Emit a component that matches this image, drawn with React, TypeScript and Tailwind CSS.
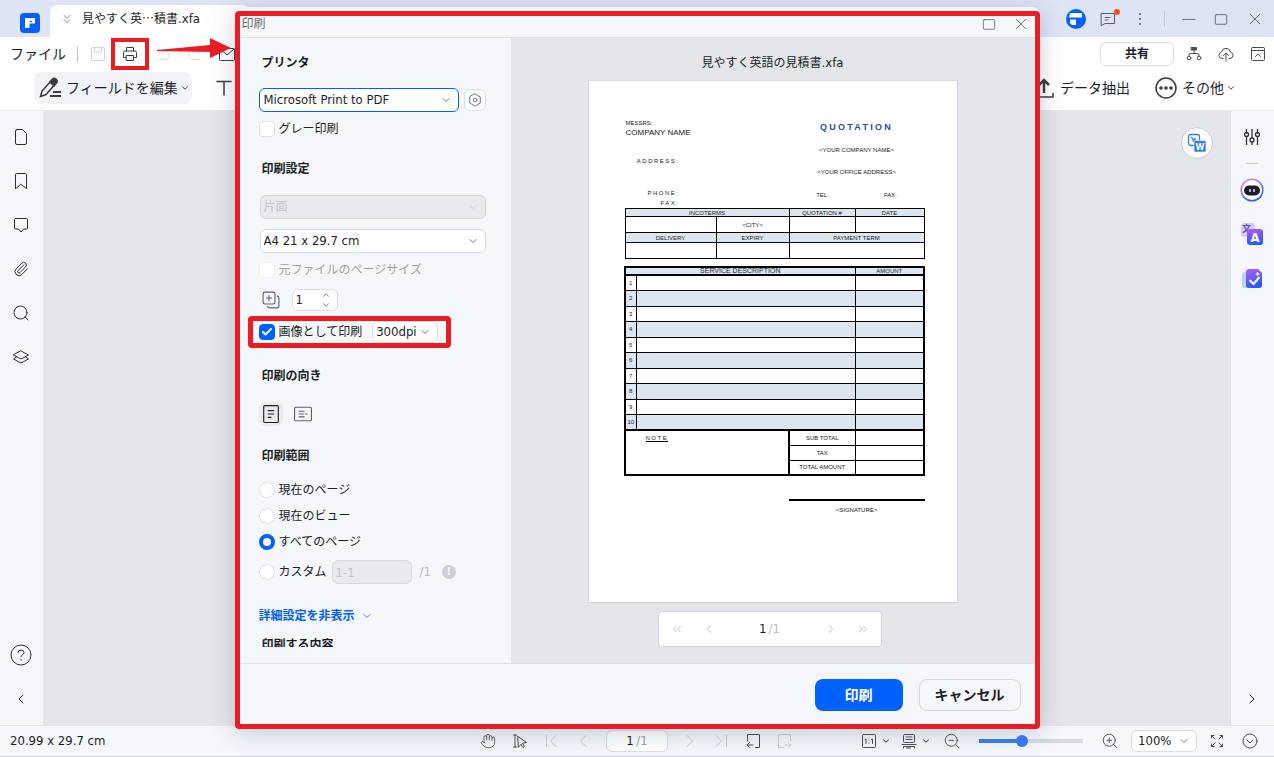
import { useState } from 'react';
import type { ReactNode } from 'react';
import clsx from 'clsx';
import {
    ChevronDown,
    ChevronLeft,
    ChevronRight,
    ChevronsDown,
    ChevronsLeft,
    ChevronsRight,
    ChevronUp,
    Check,
    Hand,
    Paperclip,
    ZoomIn,
    ZoomOut,
} from 'lucide-react';

type IconProps = {
    size?: number;
    className?: string;
    width?: number;
    children: ReactNode;
};

// Line icon on a 16 unit grid.
function Icon({ size = 16, className, width = 1, children }: IconProps) {
    return (
        <svg
            width={size}
            height={size}
            viewBox="0 0 16 16"
            fill="none"
            stroke="currentColor"
            strokeWidth={width}
            strokeLinecap="round"
            strokeLinejoin="round"
            className={clsx('shrink-0', className)}
            aria-hidden="true"
        >
            {children}
        </svg>
    );
}

function Logo({ round = false }: { round?: boolean }) {
    return (
        <svg
            width="20"
            height="20"
            viewBox="0 0 20 20"
            className="shrink-0"
            aria-hidden="true"
        >
            <rect width="20" height="20" rx={round ? 10 : 4} fill="#0061ff" />
            {round ? (
                <>
                    <path d="M4 4h12v4.5H3z" fill="#fff" />
                    <path d="M4 10.5h6V16H7a3 3 0 0 1-3-3z" fill="#fff" />
                </>
            ) : (
                <>
                    <path d="M5 5h10v5.5H5z" fill="#fff" />
                    <path d="M5 10h4.5v5H5z" fill="#fff" />
                    <path d="M9.5 8.5H12" stroke="#0061ff" />
                </>
            )}
        </svg>
    );
}

function IconButton({
    label,
    className,
    children,
}: {
    label: string;
    className?: string;
    children: ReactNode;
}) {
    return (
        <button
            type="button"
            aria-label={label}
            className={clsx(
                'flex shrink-0 items-center justify-center',
                className,
            )}
        >
            {children}
        </button>
    );
}

function TitleBar() {
    return (
        <div className="flex h-[37px] shrink-0 items-center justify-between bg-[#dfe4f4]">
            <div className="flex h-full items-end pl-5">
                <div className="flex h-full items-center pt-2">
                    <Logo />
                </div>
                <div className="ml-[10px] flex h-8 w-[200px] items-center gap-2 rounded-t-lg bg-white pb-1 pl-2.5">
                    <ChevronsDown
                        className="size-3.5 text-[#4b4f5c]"
                        strokeWidth={1.25}
                    />
                    <span className="text-xs text-[#1b1e26]">
                        見やすく英
                        <span className="font-[family-name:'Noto_Sans_CJK_JP',sans-serif]">
                            ⋯
                        </span>
                        積書<span className="text-[13px]">.xfa</span>
                    </span>
                </div>
            </div>
            <div className="flex items-center pr-px text-[#5d6078]">
                <Logo round />
                <IconButton label="メッセージ" className="relative ml-3.5 size-4">
                    <Icon>
                        <path d="M1.5 2.5h13v10H5l-3.5 2z" />
                        <path d="M5 6.5h5M5 9h3" />
                    </Icon>
                    <span className="absolute -top-0.5 -right-1 size-1.5 rounded-full bg-[#ff4d0a]" />
                </IconButton>
                <IconButton label="メニュー" className="ml-4 size-4">
                    <Icon width={2}>
                        <path d="M8 3v.1M8 8v.1M8 13v.1" />
                    </Icon>
                </IconButton>
                <span className="mr-2 ml-4 h-4 w-px bg-[#c5c9d8]" />
                <IconButton label="最小化" className="size-8">
                    <Icon size={14}>
                        <path d="M1 8.5h14" />
                    </Icon>
                </IconButton>
                <IconButton label="最大化" className="size-8">
                    <Icon size={14}>
                        <rect x="1.5" y="3" width="13" height="11" rx="1" />
                    </Icon>
                </IconButton>
                <IconButton label="閉じる" className="size-9">
                    <Icon size={14}>
                        <path d="M2.5 2.5l11 11M13.5 2.5l-11 11" />
                    </Icon>
                </IconButton>
            </div>
        </div>
    );
}

function Toolbar() {
    return (
        <div className="flex h-[74px] shrink-0 flex-col border-b border-[#e4e6ec] bg-white text-[#1b1e26]">
            <div className="flex h-[34px] items-center justify-between pr-2 pl-2.5">
                <div className="flex items-center">
                    <button type="button" className="text-sm">
                        ファイル
                    </button>
                    <span className="ml-[11px] h-4 w-px bg-[#c3c6d0]" />
                    <IconButton label="保存" className="ml-3 size-4 text-[#d3d4da]">
                        <Icon>
                            <rect x="1.5" y="1.5" width="13" height="13" rx="1.5" />
                            <path d="M4.5 1.5V6h7V1.5" />
                        </Icon>
                    </IconButton>
                    <div className="relative ml-4 flex items-center">
                        <IconButton label="印刷" className="size-4 text-[#3a3c42]">
                            <Icon>
                                <path d="M4.5 5V1.5h7V5M3.5 11.5h-2v-5A1.5 1.5 0 0 1 3 5h10a1.5 1.5 0 0 1 1.5 1.5v5h-2" />
                                <rect x="4.5" y="9.5" width="7" height="5" />
                            </Icon>
                        </IconButton>
                        <span className="pointer-events-none absolute -inset-x-[11px] -inset-y-2 border-4 border-[#ec1c24]" />
                        <svg
                            width="80"
                            height="24"
                            viewBox="0 0 80 24"
                            className="pointer-events-none absolute -top-2.5 left-[34px] z-30"
                            aria-hidden="true"
                        >
                            <path
                                d="M1 14 54 9V2l21 10-21 10v-6L1 15z"
                                fill="#ec1c24"
                            />
                        </svg>
                    </div>
                    <IconButton
                        label="元に戻す"
                        className="ml-[17px] size-4 text-[#dcdde3]"
                    >
                        <Icon>
                            <path d="M5 2 2 5l3 3M2 5h8a4 4 0 0 1 0 8.5H4" />
                        </Icon>
                    </IconButton>
                    <IconButton
                        label="やり直し"
                        className="ml-4 size-4 text-[#dcdde3]"
                    >
                        <Icon>
                            <path d="m11 2 3 3-3 3M14 5H6a4 4 0 0 0 0 8.5h6" />
                        </Icon>
                    </IconButton>
                    <IconButton
                        label="メール"
                        className="ml-4 size-4 text-[#3a3c42]"
                    >
                        <Icon>
                            <rect x=".5" y="2.5" width="15" height="12" rx="1" />
                            <path d="m1 3 7 6 7-6" />
                        </Icon>
                    </IconButton>
                </div>
                <div className="flex items-center gap-4 text-[#4a4c55]">
                    <button
                        type="button"
                        className="-mr-1 h-6 w-[74px] rounded-md border border-[#dcdde3] text-xs font-bold text-[#1b1e26]"
                    >
                        共有
                    </button>
                    <IconButton label="組織図" className="size-4">
                        <Icon>
                            <path d="M5.5 1.5h5V4h-5z" fill="currentColor" />
                            <path d="M8 4v3.5M3 10V9q0-1.5 1.5-1.5h7Q13 7.5 13 9v1" />
                            <circle cx="3" cy="12" r="1.8" />
                            <circle cx="13" cy="12" r="1.8" />
                        </Icon>
                    </IconButton>
                    <IconButton label="クラウド" className="size-4">
                        <Icon>
                            <path d="M5 12.5H4A3.3 3.3 0 0 1 3.5 6a4.6 4.6 0 0 1 9 0 3.3 3.3 0 0 1-.5 6.5h-1" />
                            <path d="M8 15V7.5M5.5 9.5 8 7l2.5 2.5" />
                        </Icon>
                    </IconButton>
                    <IconButton label="折りたたむ" className="size-4">
                        <Icon>
                            <rect x="1.5" y="1.5" width="13" height="13" rx="1" />
                            <path d="M1.5 4.5h13M5.5 10.5 8 8l2.5 2.5" />
                        </Icon>
                    </IconButton>
                </div>
            </div>
            <div className="flex h-[34px] items-center justify-between pr-[38px] pl-[34px]">
                <div className="flex items-center gap-6">
                    <button
                        type="button"
                        className="flex h-8 w-[158px] items-center rounded-lg bg-[#f1f3f9] pl-1 text-sm"
                    >
                        <svg
                            width="24"
                            height="24"
                            viewBox="0 0 24 24"
                            fill="none"
                            stroke="#3a3c42"
                            strokeWidth="1.5"
                            aria-hidden="true"
                        >
                            <path d="M2.5 20.500 4 15l8-9 4 3.500-8 9z" />
                            <path
                                d="m12 6 2.500-3q1.500-1.500 3.500 0t.5 4L16 10z"
                                fill="#3a3c42"
                            />
                            <path d="M15 16h8M12 20h11" strokeWidth="2" />
                        </svg>
                        <span className="ml-1">フィールドを編集</span>
                        <ChevronDown className="ml-0.5 size-2.5" strokeWidth={2} />
                    </button>
                    <IconButton label="テキスト" className="size-4 text-[#3a3c42]">
                        <Icon width={1.5}>
                            <path d="M1 1.5h14M8 1.5V15" />
                        </Icon>
                    </IconButton>
                </div>
                <div className="flex items-center">
                    <button type="button" className="flex items-center text-sm">
                        <svg
                            width="20"
                            height="24"
                            viewBox="0 0 20 24"
                            fill="none"
                            stroke="#3a3c42"
                            strokeWidth="2.5"
                            aria-hidden="true"
                        >
                            <path d="M10 17V4M5 9l5-5 5 5" />
                            <path d="M1 17v4h18v-4" strokeWidth="1.5" />
                        </svg>
                        <span className="ml-1.5">データ抽出</span>
                    </button>
                    <button type="button" className="ml-6 flex items-center text-sm">
                        <svg width="24" height="24" viewBox="0 0 24 24" aria-hidden="true">
                            <circle
                                cx="12"
                                cy="12"
                                r="10"
                                fill="none"
                                stroke="#3a3c42"
                                strokeWidth="1.5"
                            />
                            <circle cx="7" cy="12" r="1.8" fill="#3a3c42" />
                            <circle cx="12" cy="12" r="1.8" fill="#3a3c42" />
                            <circle cx="17" cy="12" r="1.8" fill="#3a3c42" />
                        </svg>
                        <span className="ml-1">その他</span>
                        <ChevronDown className="ml-0.5 size-2.5" strokeWidth={2} />
                    </button>
                </div>
            </div>
        </div>
    );
}

function LeftRail() {
    return (
        <nav className="flex w-[43px] shrink-0 flex-col items-center bg-[#f5f7fb] py-[18px] pr-0.5 text-[#2d2f36]">
            <div className="flex flex-1 flex-col gap-7">
                <IconButton label="ページ" className="size-4">
                    <Icon>
                        <path d="M3.5.5h6l4 4V14q0 1.5-1.5 1.5H4Q2.5 15.5 2.5 14V2Q2.500.5 4 .5z" />
                    </Icon>
                </IconButton>
                <IconButton label="しおり" className="size-4">
                    <Icon>
                        <path d="M2.500 15.500V1.500q0-1 1-1h9q1 0 1 1v14l-5.500-4z" />
                    </Icon>
                </IconButton>
                <IconButton label="コメント" className="size-4">
                    <Icon>
                        <path d="M2.500 1.500h11q1 0 1 1v8.500q0 1-1 1h-3L8 15l-2.500-3h-3q-1 0-1-1V2.500q0-1 1-1z" />
                    </Icon>
                </IconButton>
                <IconButton label="添付" className="size-4">
                    <Paperclip className="size-4" strokeWidth={1.5} />
                </IconButton>
                <IconButton label="検索" className="size-4">
                    <Icon>
                        <circle cx="7.5" cy="7.5" r="6.5" />
                        <path d="m12 12 3 3" />
                    </Icon>
                </IconButton>
                <IconButton label="レイヤー" className="size-4">
                    <Icon>
                        <path d="m8 2 7.500 4L8 10 .5 6z" />
                        <path d="M3.500 7.800.5 10 8 14l7.500-4-3-2.200" />
                    </Icon>
                </IconButton>
            </div>
            <div className="flex flex-col items-center gap-[26px]">
                <IconButton label="ヘルプ" className="size-5">
                    <svg
                        width="22"
                        height="22"
                        viewBox="0 0 22 22"
                        fill="none"
                        stroke="currentColor"
                        className="shrink-0"
                        aria-hidden="true"
                    >
                        <circle cx="11" cy="11" r="10" />
                        <path d="M8 9q0-3 3-3t3 2.500q0 1.500-1.500 2.300T11 13M11 15v1.500" />
                    </svg>
                </IconButton>
                <IconButton label="閉じる" className="size-4">
                    <ChevronLeft className="size-4" strokeWidth={1.5} />
                </IconButton>
            </div>
        </nav>
    );
}

function RightRail() {
    return (
        <nav className="flex w-11 shrink-0 flex-col items-center border-l border-[#dfe1e8] bg-[#f5f7fb] py-[18px] pr-0.5 text-[#2d2f36]">
            <IconButton label="設定" className="size-4">
                <Icon width={1.3}>
                    <path d="M2.500 0v4M2.500 8v8M8 0v9M8 13v3M13.500 0v4M13.500 8v8" />
                    <circle cx="2.5" cy="5.5" r="2" />
                    <circle cx="8" cy="11" r="2" />
                    <circle cx="13.5" cy="5.5" r="2" />
                </Icon>
            </IconButton>
            <span className="mt-[18px] h-px w-3 bg-[#c9ccd6]" />
            <IconButton label="AI" className="mt-3.5 size-6">
                <svg width="24" height="24" viewBox="0 0 24 24" aria-hidden="true">
                    <defs>
                        <linearGradient id="ring" x1="0" y1="0" x2="0.5" y2="1">
                            <stop offset="0" stopColor="#f78be8" />
                            <stop offset="1" stopColor="#2a62ff" />
                        </linearGradient>
                        <linearGradient id="tile" x1="0.2" y1="0" x2="0.5" y2="1">
                            <stop offset="0" stopColor="#b05cf5" />
                            <stop offset="1" stopColor="#1f5cff" />
                        </linearGradient>
                    </defs>
                    <circle
                        cx="12"
                        cy="12"
                        r="10.8"
                        fill="#fff"
                        stroke="url(#ring)"
                        strokeWidth="1.5"
                    />
                    <rect x="4" y="7.5" width="16" height="10" rx="5" fill="#1b1b2b" />
                    <path d="M10 11v3M14 11v3" stroke="#fff" strokeWidth="1.3" />
                </svg>
            </IconButton>
            <IconButton label="翻訳" className="mt-5 size-6">
                <svg width="24" height="24" viewBox="0 0 24 24" aria-hidden="true">
                    <rect x="1" y="1" width="14" height="14" rx="3" fill="#d9cdf6" />
                    <text x="2" y="10" fontSize="9" fontWeight="700" fill="#5a4fe0">
                        文
                    </text>
                    <rect x="7" y="7" width="16" height="16" rx="3" fill="url(#tile)" />
                    <text
                        x="15"
                        y="20"
                        fontSize="13"
                        fontWeight="700"
                        textAnchor="middle"
                        fill="#fff"
                    >
                        A
                    </text>
                </svg>
            </IconButton>
            <IconButton label="校正" className="mt-5 size-6">
                <svg width="24" height="24" viewBox="0 0 24 24" aria-hidden="true">
                    <rect x="2" y="6" width="14" height="16" rx="3" fill="#bdd0f8" />
                    <path
                        d="M9 3h9l4 4v12q0 3-3 3H9q-3 0-3-3V6q0-3 3-3z"
                        fill="url(#tile)"
                    />
                    <path
                        d="m9.500 14 4 4 6-7"
                        stroke="#fff"
                        strokeWidth="2"
                        fill="none"
                    />
                    <path d="M17.500 6v4M15.500 8h4" stroke="#fff" strokeWidth="1.2" />
                </svg>
            </IconButton>
            <IconButton label="開く" className="mt-auto size-4">
                <ChevronRight className="size-4" strokeWidth={1.5} />
            </IconButton>
        </nav>
    );
}

function StatusBar() {
    return (
        <footer className="flex h-8 shrink-0 items-center border-t border-b border-t-[#e4e6ec] border-b-[#cdd2e2] bg-[#f5f7fb] px-2.5 text-[13px] text-[#1b1e26]">
            <span className="flex-1">20.99 x 29.7 cm</span>
            <div className="flex items-center gap-4 text-[#4a4c55]">
                <IconButton label="手のひら" className="size-4">
                    <Hand className="size-4" strokeWidth={1.25} />
                </IconButton>
                <IconButton label="選択" className="size-4">
                    <Icon>
                        <path d="M1.500 2h3M3 2v12M1.500 14h3M6 3.500l8.500 6-4 .8 2 3.200-1.700 1L9 11.200 6.500 14z" />
                    </Icon>
                </IconButton>
                <IconButton label="最初" className="size-4 text-[#c9ccd4]">
                    <Icon>
                        <path d="M2.500 2.500v11M12 2.500 6.500 8l5.500 5.500" />
                    </Icon>
                </IconButton>
                <IconButton label="前" className="size-4 text-[#c9ccd4]">
                    <Icon>
                        <path d="M10 2.500 4.500 8l5.500 5.500" />
                    </Icon>
                </IconButton>
                <div className="-mx-0.5 flex h-[22px] w-[62px] items-center justify-center rounded-md border border-[#dcdde3] bg-white">
                    <input
                        aria-label="ページ番号"
                        defaultValue="1"
                        className="w-2 bg-transparent text-[#1b1e26] outline-none"
                    />
                    <span className="ml-0.5 text-[#a3a5ae]">/1</span>
                </div>
                <IconButton label="次" className="size-4 text-[#c9ccd4]">
                    <Icon>
                        <path d="M5 2.500 10.500 8 5 13.500" />
                    </Icon>
                </IconButton>
                <IconButton label="最後" className="size-4 text-[#c9ccd4]">
                    <Icon>
                        <path d="M2 2.500 7.500 8 2 13.500M12.500 2.500v11" />
                    </Icon>
                </IconButton>
                <IconButton label="前の表示" className="size-4">
                    <Icon>
                        <path d="M1.500 8V1.500h12v13h-4M1 12h6M3.500 9.500 1 12l2.500 2.500" />
                    </Icon>
                </IconButton>
                <IconButton label="次の表示" className="size-4 text-[#c9ccd4]">
                    <Icon>
                        <path d="M12.500 8V1.500H.5v13h5M7 12h6M10.500 9.500 13 12l-2.500 2.500" />
                    </Icon>
                </IconButton>
            </div>
            <div className="flex flex-1 items-center justify-end text-[#4a4c55]">
                <IconButton label="実寸" className="gap-1">
                    <Icon>
                        <rect x="1.5" y="1.5" width="13" height="13" rx="1" />
                        <path d="m4 6.500 1-.5v4.500M10.500 6.500l1-.5v4.500M8 7v.1M8 10v.1" />
                    </Icon>
                    <ChevronDown className="size-2.5" strokeWidth={2.5} />
                </IconButton>
                <IconButton label="表示モード" className="ml-2.5 gap-1">
                    <Icon>
                        <rect x="2.5" y="1.5" width="11" height="8" rx="1" />
                        <path d="M5 4h6M5 6.500h6M1 11.500h14M2.500 15v-1.500h11V15M5.500 15h4" />
                    </Icon>
                    <ChevronDown className="size-2.5" strokeWidth={2.5} />
                </IconButton>
                <IconButton label="縮小" className="ml-3 size-[18px]">
                    <ZoomOut className="size-[18px]" strokeWidth={1.25} />
                </IconButton>
                <input
                    type="range"
                    aria-label="ズーム"
                    defaultValue={40}
                    className="mx-[18px] h-1 w-[104px] appearance-none bg-[linear-gradient(to_right,#367cfb_40%,#d5d8e6_40%)] [&::-webkit-slider-thumb]:size-3 [&::-webkit-slider-thumb]:appearance-none [&::-webkit-slider-thumb]:rounded-full [&::-webkit-slider-thumb]:bg-[#367cfb]"
                />
                <IconButton label="拡大" className="size-[18px]">
                    <ZoomIn className="size-[18px]" strokeWidth={1.25} />
                </IconButton>
                <Dropdown
                    label="倍率"
                    options={['100%']}
                    className="mx-3 h-[22px] w-[66px] border-[#dcdde3] bg-white pl-1.5 text-[#1b1e26]"
                />
                <IconButton label="全画面" className="size-4">
                    <Icon>
                        <path d="M2.500 5V2.500H5M2.500 2.500 6 6M11 2.500h2.500V5M13.500 2.500 10 6M2.500 11v2.500H5M2.500 13.500 6 10M13.500 11v2.500H11M13.500 13.500 10 10" />
                    </Icon>
                </IconButton>
                <IconButton label="その他の表示" className="mr-1.5 ml-[17px] size-4">
                    <Icon>
                        <circle cx="8" cy="8" r="7" />
                        <path d="m5 7 3 3 3-3" />
                    </Icon>
                </IconButton>
            </div>
        </footer>
    );
}

type DropdownProps = {
    label: string;
    options: string[];
    className?: string;
    disabled?: boolean;
};

function Dropdown({ label, options, className, disabled }: DropdownProps) {
    return (
        <div className={clsx('relative shrink-0 rounded-md border', className)}>
            <select
                aria-label={label}
                disabled={disabled}
                className="block h-full w-full appearance-none bg-transparent outline-none"
            >
                {options.map((o) => (
                    <option key={o}>{o}</option>
                ))}
            </select>
            <ChevronDown
                className="pointer-events-none absolute inset-y-0 right-1.5 my-auto size-3 opacity-70"
                strokeWidth={1.75}
            />
        </div>
    );
}

function Checkbox({
    label,
    defaultChecked,
    disabled,
}: {
    label: string;
    defaultChecked?: boolean;
    disabled?: boolean;
}) {
    return (
        <label
            className={clsx(
                'flex items-center gap-1 text-xs',
                disabled && 'text-[#a0a2a9]',
            )}
        >
            <span className="relative flex size-4">
                <input
                    type="checkbox"
                    defaultChecked={defaultChecked}
                    disabled={disabled}
                    className="peer size-4 appearance-none rounded border border-[#e0e2e8] bg-white checked:border-[#0061ff] checked:bg-[#0061ff] disabled:border-[#f0f1f5]"
                />
                <Check
                    className="pointer-events-none absolute inset-0.5 hidden size-3 text-white peer-checked:block"
                    strokeWidth={4}
                />
            </span>
            {label}
        </label>
    );
}

const RANGES = [
    { id: 'page', label: '現在のページ' },
    { id: 'view', label: '現在のビュー' },
    { id: 'all', label: 'すべてのページ' },
    { id: 'custom', label: 'カスタム' },
];

function Heading({ children }: { children: ReactNode }) {
    return (
        <h2 className="pl-[3px] text-xs leading-6 font-bold whitespace-nowrap">
            {children}
        </h2>
    );
}

function PrintSettings() {
    const [range, setRange] = useState('all');

    return (
        <div className="w-[271px] shrink-0 pb-4">
            <div className="flex h-[609px] flex-col items-start overflow-hidden pt-[13px] pl-[19px] text-[#1b1e26] *:shrink-0">
                <Heading>プリンタ</Heading>
                <div className="mt-[13px] flex h-6 items-center gap-[5px]">
                    <Dropdown
                        label="プリンタ"
                        options={['Microsoft Print to PDF']}
                        className="h-6 w-[200px] border-[#0061ff] bg-white pl-1 text-[13px]"
                    />
                    <IconButton
                        label="プリンタの設定"
                        className="size-[22px] rounded-md border border-[#dcdde3] bg-white text-[#5d6078]"
                    >
                        <Icon size={14}>
                            <path d="m8 1 6 3.500v7L8 15l-6-3.500v-7z" />
                            <circle cx="8" cy="8" r="2" />
                        </Icon>
                    </IconButton>
                </div>
                <div className="mt-[5px] flex h-6 items-center">
                    <Checkbox label="グレー印刷" />
                </div>

                <div className="mt-4">
                    <Heading>印刷設定</Heading>
                </div>
                <Dropdown
                    label="両面印刷"
                    options={['片面']}
                    disabled
                    className="mt-3.5 ml-px h-6 w-[226px] border-[#d6d8de] bg-[#e9eaee] pl-[3px] text-xs text-[#c3c5cb]"
                />
                <Dropdown
                    label="用紙サイズ"
                    options={['A4 21 x 29.7 cm']}
                    className="mt-2.5 ml-px h-6 w-[226px] border-[#dcdde3] bg-white pl-[3px] text-[13px]"
                />
                <div className="mt-[5px] flex h-6 items-center">
                    <Checkbox label="元ファイルのページサイズ" disabled />
                </div>
                <div className="mt-1.5 flex h-6 items-center">
                    <Icon size={18} className="ml-[3px] text-[#5d6078]">
                        <rect x="1" y="1" width="10.5" height="10.5" rx="1.5" />
                        <path d="M6.200 4v4.500M4 6.200h4.500M13.500 4.500q1.500 0 1.500 1.500v7.500q0 1.500-1.500 1.500H6.500Q5 15 5 13.500" />
                    </Icon>
                    <div className="ml-3 flex h-[22px] w-[46px] items-center rounded-md border border-[#dcdde3] bg-white pr-1.5 pl-[3px]">
                        <input
                            aria-label="部数"
                            defaultValue="1"
                            className="w-5 flex-1 bg-transparent text-[13px] outline-none"
                        />
                        <span className="flex flex-col text-[#5d6078]">
                            <ChevronUp className="size-2.5" strokeWidth={2} />
                            <ChevronDown className="size-2.5" strokeWidth={2} />
                        </span>
                    </div>
                </div>
                <div className="relative mt-2 flex h-6 items-center gap-2.5 pr-0.5">
                    <Checkbox label="画像として印刷" defaultChecked />
                    <Dropdown
                        label="解像度"
                        options={['300dpi']}
                        className="h-[22px] w-[66px] border-[#dcdde3] bg-white pl-[3px] text-[13px]"
                    />
                    <span className="pointer-events-none absolute -inset-x-[11px] -inset-y-1 rounded-sm border-[5px] border-[#ec1c24]" />
                </div>

                <div className="mt-5">
                    <Heading>印刷の向き</Heading>
                </div>
                <div className="mt-3.5 flex h-6 items-center gap-2">
                    <IconButton
                        label="縦"
                        className="size-6 rounded-md bg-[#e9ebf0] text-[#1b1e26]"
                    >
                        <Icon size={18}>
                            <rect x="1.5" y=".5" width="13" height="15" rx="1" />
                            <path d="M5.500 5h5M5.500 8h5M5.500 11H8" />
                        </Icon>
                    </IconButton>
                    <IconButton label="横" className="size-6 text-[#5d6078]">
                        <Icon size={18}>
                            <rect x=".5" y="2" width="15" height="12" rx="1" />
                            <path d="M4.500 5.500H9M4.500 8h4M10 8h1.500M4.500 10.500H9" />
                        </Icon>
                    </IconButton>
                </div>

                <div className="mt-[18px]">
                    <Heading>印刷範囲</Heading>
                </div>
                <div className="mt-2.5 flex flex-col gap-0.5">
                    {RANGES.map((r) => (
                        <div
                            key={r.id}
                            className={clsx(
                                'flex h-6 items-center text-xs',
                                r.id === 'custom' && 'mt-1',
                            )}
                        >
                            <label className="flex items-center gap-1">
                                <input
                                    type="radio"
                                    name="range"
                                    checked={range === r.id}
                                    onChange={() => setRange(r.id)}
                                    className="size-4 appearance-none rounded-full border border-[#e0e2e8] bg-white checked:border-4 checked:border-[#0061ff]"
                                />
                                {r.label}
                            </label>
                            {r.id === 'custom' && (
                                <>
                                    <input
                                        aria-label="ページ範囲"
                                        placeholder="1-1"
                                        disabled={range !== 'custom'}
                                        className="ml-[5px] h-6 w-20 rounded-md border border-[#d6d8de] bg-[#e9eaee] px-[3px] text-[13px] placeholder:text-[#c3c5cb]"
                                    />
                                    <span className="ml-2 text-[13px] text-[#b9bbc3]">
                                        /1
                                    </span>
                                    <span className="ml-[11px] flex size-3.5 items-center justify-center rounded-full bg-[#cccfd7] text-[10px] font-bold text-white">
                                        !
                                    </span>
                                </>
                            )}
                        </div>
                    ))}
                </div>
                <button
                    type="button"
                    className="mt-5 flex h-6 items-center gap-1.5 text-xs font-bold text-[#0061ff]"
                >
                    詳細設定を非表示
                    <ChevronDown className="size-3 opacity-70" strokeWidth={2} />
                </button>
                <div className="mt-[5px]">
                    <Heading>印刷する内容</Heading>
                </div>
            </div>
        </div>
    );
}

const SERVICE_ROWS = [1, 2, 3, 4, 5, 6, 7, 8, 9, 10];

function QuotationSheet() {
    return (
        <article className="w-[370px] border border-[#d3d5e3] bg-white pt-[37px] pr-8 pb-[87px] pl-[35px] font-[family-name:'Liberation_Sans',sans-serif] text-[6px] leading-[10px] text-[#222]">
            <header className="flex h-[90px] justify-between">
                <div className="w-14 pl-0.5 whitespace-nowrap">
                    <p>MESSRS:</p>
                    <p className="text-[8px]">COMPANY NAME</p>
                    <p className="mt-[18px] text-right tracking-[0.25em]">ADDRESS:</p>
                    <p className="mt-[22px] text-right tracking-[0.25em]">PHONE:</p>
                    <p className="text-right tracking-[0.25em]">FAX:</p>
                </div>
                <div className="w-[136px] text-center">
                    <h3 className="mt-1 text-[9px] font-bold tracking-[0.25em] text-[#2c4f82]">
                        QUOTATION
                    </h3>
                    <p className="mt-[13px]">&lt;YOUR COMPANY NAME&gt;</p>
                    <p className="mt-3">&lt;YOUR OFFICE ADDRESS&gt;</p>
                    <div className="mt-[13px] grid grid-cols-2">
                        <p>TEL:</p>
                        <p>FAX:</p>
                    </div>
                </div>
            </header>

            <table className="ml-px w-[299px] table-fixed border-collapse text-center leading-[6px] [&_td]:border [&_td]:border-black [&_td]:p-0 [&_th]:border [&_th]:border-black [&_th]:bg-[#dce6f1] [&_th]:p-0 [&_th]:font-normal">
                <colgroup>
                    <col className="w-[91px]" />
                    <col className="w-[73px]" />
                    <col className="w-[66px]" />
                    <col className="w-[69px]" />
                </colgroup>
                <tbody>
                    <tr className="h-2">
                        <th colSpan={2}>INCOTERMS</th>
                        <th>QUOTATION #</th>
                        <th>DATE</th>
                    </tr>
                    <tr className="h-4">
                        <td />
                        <td>&lt;CITY&gt;</td>
                        <td />
                        <td />
                    </tr>
                    <tr className="h-2.5">
                        <th>DELIVERY</th>
                        <th>EXPIRY</th>
                        <th colSpan={2}>PAYMENT TERM</th>
                    </tr>
                    <tr className="h-4">
                        <td />
                        <td />
                        <td colSpan={2} />
                    </tr>
                </tbody>
            </table>

            <table className="mt-[7px] w-[300px] table-fixed border-collapse border-2 border-black text-center leading-[6px] [&_td]:border [&_td]:border-black [&_td]:p-0 [&_th]:border [&_th]:border-black [&_th]:p-0 [&_th]:font-normal">
                <colgroup>
                    <col className="w-3" />
                    <col className="w-[152px]" />
                    <col className="w-[67px]" />
                    <col className="w-[68px]" />
                </colgroup>
                <thead className="border-b-2 border-black bg-[#dce6f1]">
                    <tr className="h-2">
                        <th colSpan={3} className="text-[7px]">
                            SERVICE DESCRIPTION
                        </th>
                        <th>AMOUNT</th>
                    </tr>
                </thead>
                <tbody className="border-b-2 border-black">
                    {SERVICE_ROWS.map((n) => (
                        <tr
                            key={n}
                            className={n % 2 ? 'h-[15px]' : 'h-4 bg-[#dce6f1]'}
                        >
                            <td>{n}</td>
                            <td colSpan={2} />
                            <td />
                        </tr>
                    ))}
                </tbody>
                <tbody>
                    {['SUB TOTAL', 'TAX', 'TOTAL AMOUNT'].map((t, i) => (
                        <tr key={t} className="h-[15px]">
                            {i === 0 && (
                                <td
                                    colSpan={2}
                                    rowSpan={3}
                                    className="align-top"
                                >
                                    <p className="pt-1 pl-5 text-left">
                                        <span className="border-b border-black tracking-[0.25em]">
                                            NOTE
                                        </span>
                                    </p>
                                </td>
                            )}
                            <td className="border-l-2!">{t}</td>
                            <td />
                        </tr>
                    ))}
                </tbody>
            </table>

            <p className="mt-[23px] ml-auto w-[136px] border-t-2 border-black pt-1 text-center">
                &lt;SIGNATURE&gt;
            </p>
        </article>
    );
}

function Preview() {
    return (
        <div className="flex flex-1 flex-col items-center bg-[#e5e6ea] pt-[13px]">
            <p className="h-6 text-xs leading-6 text-[#1b1e26]">
                見やすく英語の見積書<span className="text-[13px]">.xfa</span>
            </p>
            <div className="mt-[5px]">
                <QuotationSheet />
            </div>
            <div className="mt-2 mr-1.5 flex h-9 w-[224px] items-center justify-between rounded border border-[#d3d5e3] bg-white px-2.5 text-[13px] text-[#b9bbc3]">
                <div className="flex gap-4">
                    <IconButton label="最初のページ" className="size-4">
                        <ChevronsLeft className="size-3.5" strokeWidth={1.5} />
                    </IconButton>
                    <IconButton label="前のページ" className="size-4">
                        <ChevronLeft className="size-3.5" strokeWidth={1.5} />
                    </IconButton>
                </div>
                <span>
                    <span className="mr-0.5 text-[#1b1e26]">1</span>/1
                </span>
                <div className="flex gap-4">
                    <IconButton label="次のページ" className="size-4">
                        <ChevronRight className="size-3.5" strokeWidth={1.5} />
                    </IconButton>
                    <IconButton label="最後のページ" className="size-4">
                        <ChevronsRight className="size-3.5" strokeWidth={1.5} />
                    </IconButton>
                </div>
            </div>
        </div>
    );
}

function PrintDialog() {
    return (
        <div className="pointer-events-none absolute inset-x-0 top-[7px] bottom-7 z-20 flex justify-center">
            <section
                role="dialog"
                aria-label="印刷"
                className="pointer-events-auto flex w-full max-w-[805px] flex-col rounded-t-lg bg-[#f5f7fb] pt-1 shadow-[0_4px_24px_rgba(60,70,110,0.25)]"
            >
                <div className="flex flex-1 flex-col rounded-sm border-[5px] border-[#ec1c24]">
                    <div className="flex h-[22px] shrink-0 items-center justify-between border-b border-[#dfe1e6] pb-1.5 pl-0.5 text-xs text-[#6b6d78]">
                        <span>印刷</span>
                        <div className="flex items-center gap-4 pr-1.5">
                            <IconButton label="最大化" className="size-4">
                                <Icon size={14}>
                                    <rect x="1.5" y="3" width="13" height="11" rx="1" />
                                </Icon>
                            </IconButton>
                            <IconButton label="閉じる" className="size-4">
                                <Icon size={14}>
                                    <path d="M2.500 2.500l11 11M13.500 2.500l-11 11" />
                                </Icon>
                            </IconButton>
                        </div>
                    </div>
                    <div className="flex flex-1">
                        <PrintSettings />
                        <Preview />
                    </div>
                    <div className="flex h-[61px] shrink-0 items-center justify-end gap-4 border-t border-[#dfe1e6] pt-0.5 pr-3.5 text-sm font-bold">
                        <button
                            type="button"
                            className="h-8 w-[88px] rounded-lg bg-[#0061ff] text-white"
                        >
                            印刷
                        </button>
                        <button
                            type="button"
                            className="h-8 w-[102px] rounded-lg border border-[#d6d8de] text-[#1b1e26]"
                        >
                            キャンセル
                        </button>
                    </div>
                </div>
            </section>
        </div>
    );
}

export default function App() {
    return (
        <div
            lang="ja"
            className="relative flex min-h-screen flex-col bg-[#f5f7fb] font-[family-name:'DejaVu_Sans_Condensed','Noto_Sans_CJK_JP',sans-serif]"
        >
            <TitleBar />
            <Toolbar />
            <main className="flex flex-1 bg-[#e5e6ea]">
                <LeftRail />
                <div className="flex flex-1 justify-end pt-4 pr-[17px]">
                    <IconButton
                        label="Wordに変換"
                        className="size-8 rounded-full border border-[#c6cae0] bg-white"
                    >
                        <svg width="20" height="20" viewBox="0 0 20 20" aria-hidden="true">
                            <rect
                                x="1.5"
                                y="1.5"
                                width="11"
                                height="11"
                                rx="2"
                                fill="none"
                                stroke="#2f7bf0"
                                strokeWidth="1.3"
                            />
                            <path
                                d="m4 4 4 4M8 5v3H5"
                                fill="none"
                                stroke="#2f7bf0"
                                strokeWidth="1.2"
                            />
                            <rect
                                x="7"
                                y="7.5"
                                width="12"
                                height="11.5"
                                rx="1.5"
                                fill="#2f7bf0"
                                stroke="#fff"
                                strokeWidth=".6"
                            />
                            <text
                                x="13"
                                y="16.5"
                                fontSize="9"
                                fontWeight="700"
                                textAnchor="middle"
                                fill="#fff"
                            >
                                W
                            </text>
                        </svg>
                    </IconButton>
                </div>
                <RightRail />
            </main>
            <StatusBar />
            <PrintDialog />
        </div>
    );
}
